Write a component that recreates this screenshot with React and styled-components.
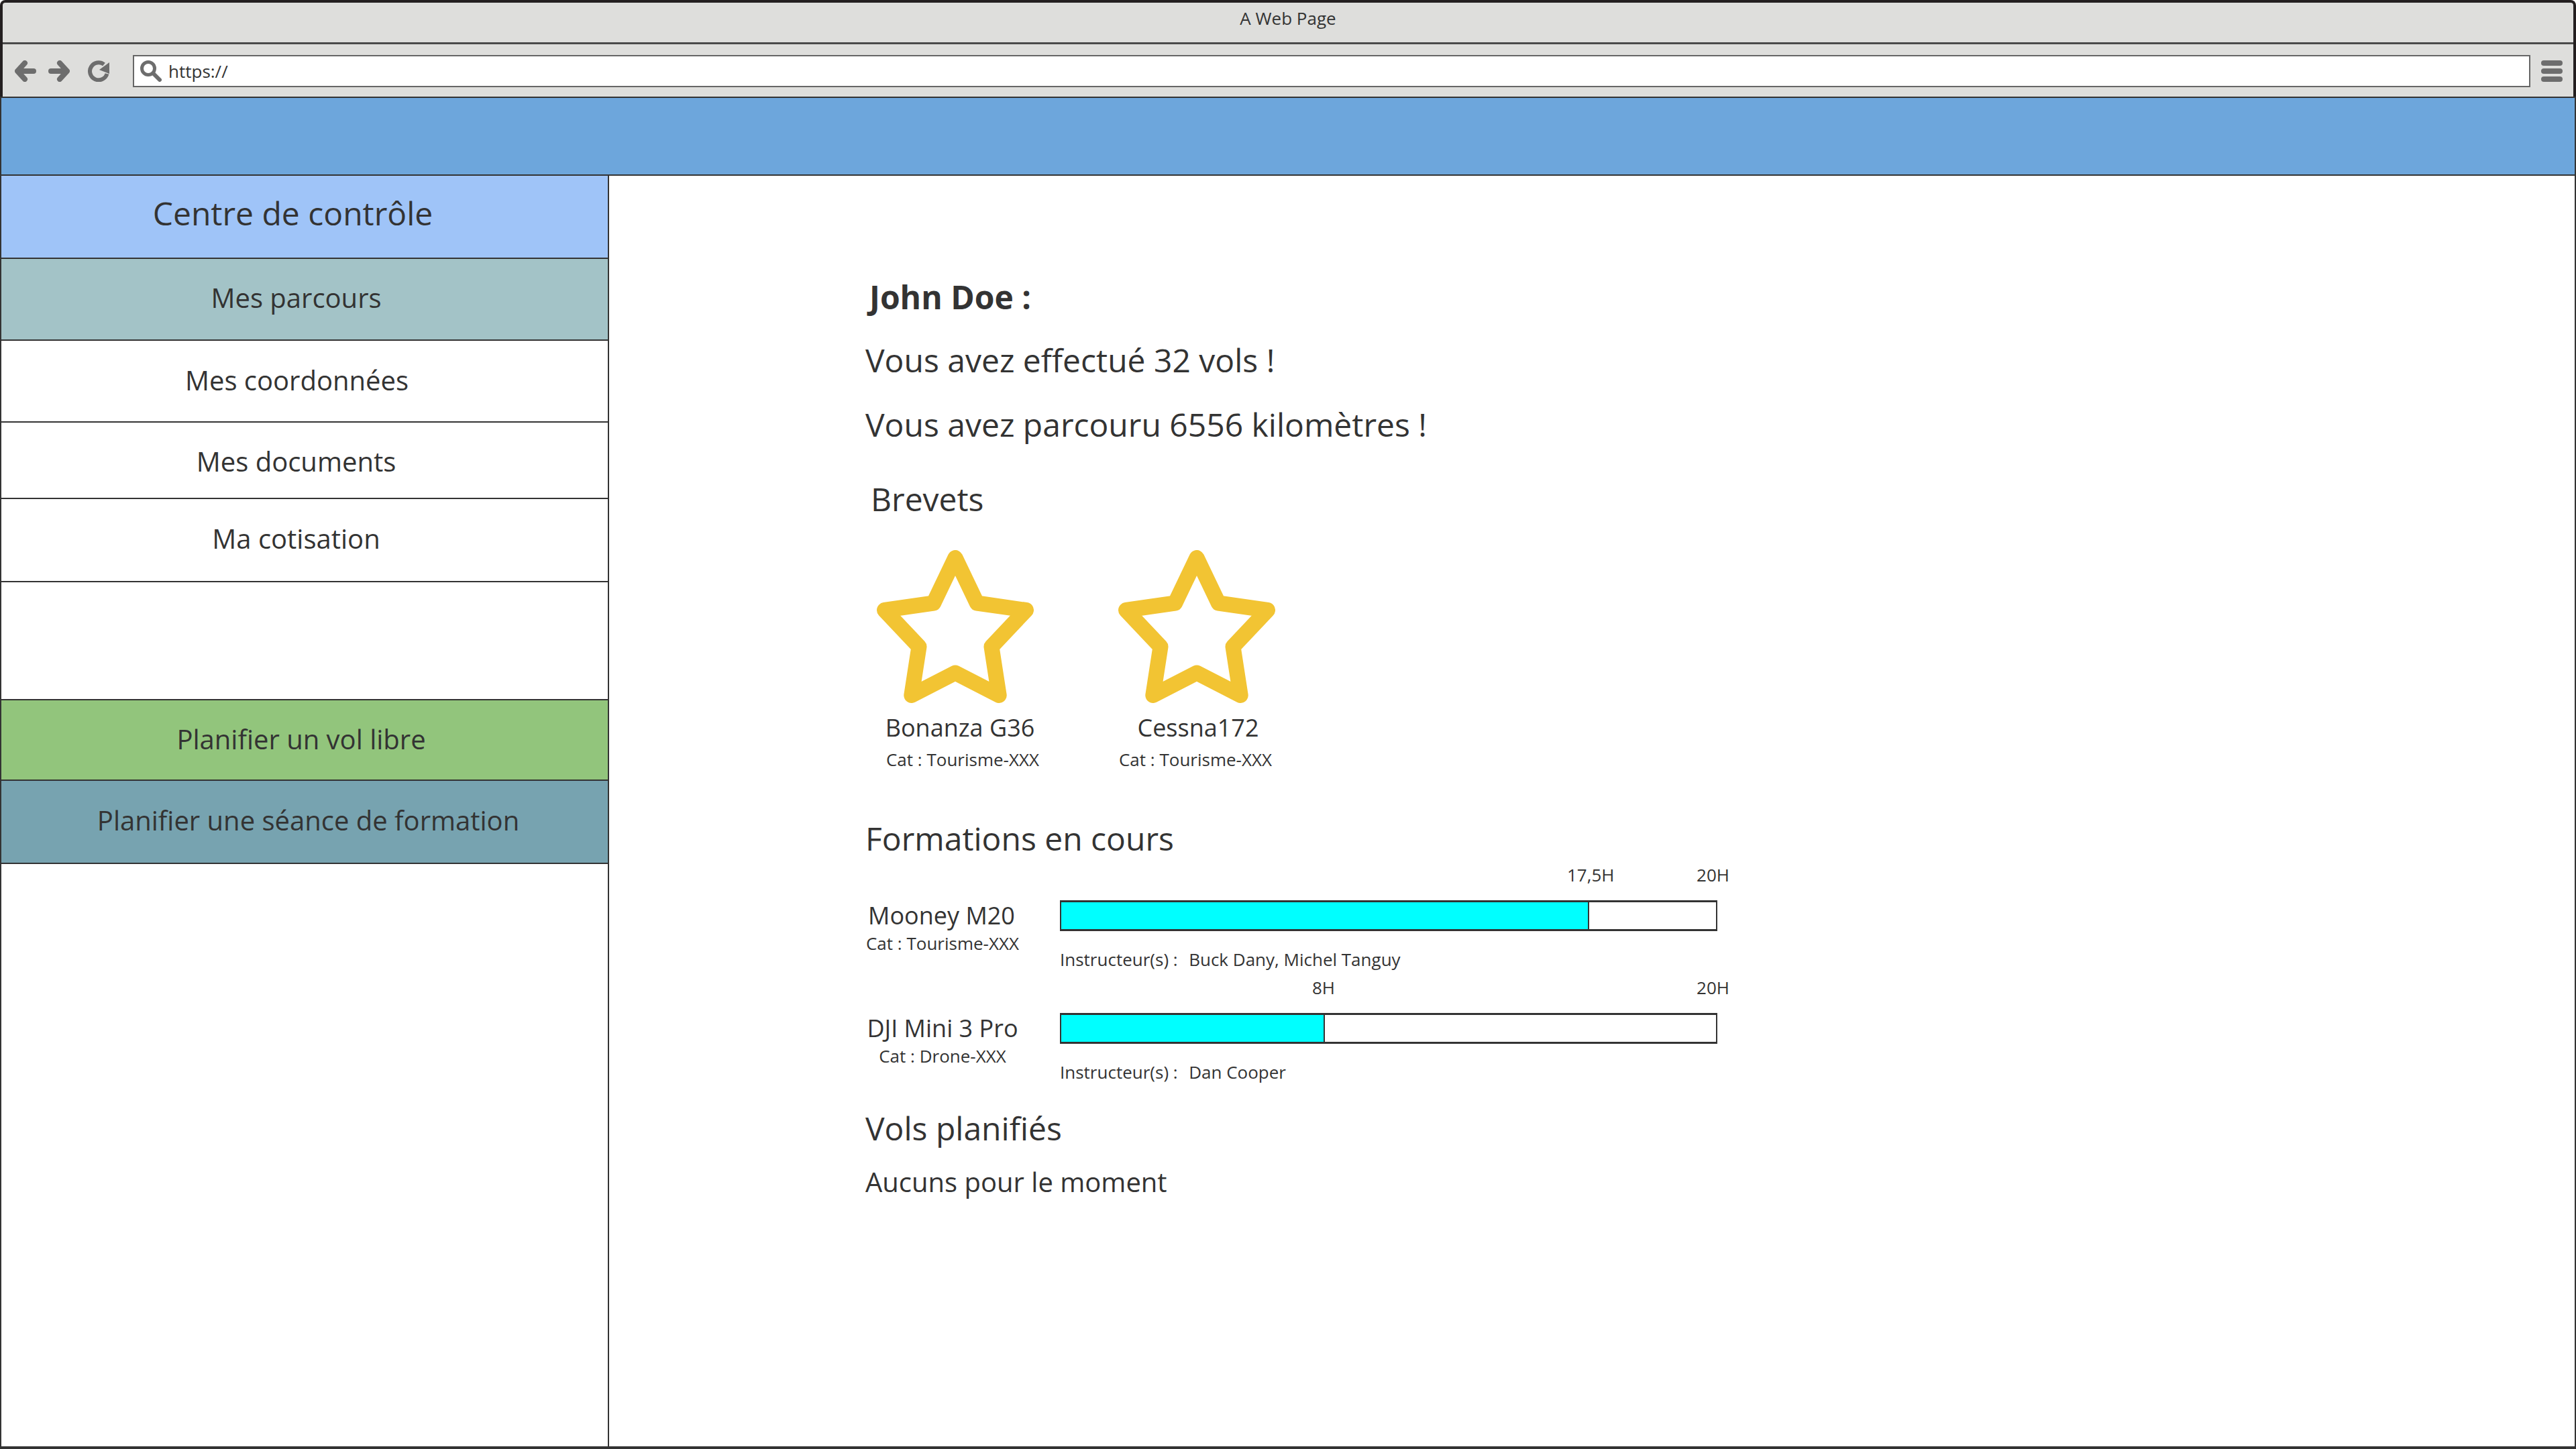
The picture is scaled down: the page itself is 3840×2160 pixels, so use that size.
import React from 'react'
import styled, { createGlobalStyle } from 'styled-components'

const GlobalStyle = createGlobalStyle`
  html, body {
    margin: 0;
    padding: 0;
    background: #fff;
  }
  * {
    box-sizing: border-box;
  }
`

const Window = styled.div`
  width: 3840px;
  height: 2160px;
  display: flex;
  flex-direction: column;
  overflow: hidden;
  font-family: 'Open Sans', 'Noto Sans', sans-serif;
  color: #333;
`

const Chrome = styled.header`
  height: 144px;
  flex-shrink: 0;
  background: #dededc;
  border: 4px solid #231f20;
  border-bottom: none;
  border-radius: 8px 8px 0 0;
`

const TitleBar = styled.div`
  height: 62px;
  display: flex;
  align-items: center;
  justify-content: center;
  font-size: 26px;
  padding-bottom: 14px;
  border-bottom: 3px solid #4a4a4a;
`

const Toolbar = styled.div`
  height: 78px;
  display: flex;
  align-items: center;
  padding: 2px 16px 0 18px;
`

const ToolIcon = styled.svg`
  width: 32px;
  height: 32px;
  flex-shrink: 0;
  margin-right: ${(p) => p.$gap || 0}px;
  color: #6d6d6d;
`

const AddressBar = styled.div`
  flex: 1;
  height: 48px;
  display: flex;
  align-items: center;
  background: #fff;
  border: 2px solid #666;
  padding-left: 9px;
  font-size: 26px;
  margin-right: 16px;
`

const Url = styled.span`
  margin-left: 10px;
`

const Banner = styled.div`
  height: 118px;
  flex-shrink: 0;
  background: #6da6dc;
  border: 2px solid #333;
`

const Body = styled.div`
  flex: 1;
  display: flex;
  min-height: 0;
  border: 2px solid #333;
  border-top: none;
  border-bottom-width: 4px;
`

const Sidebar = styled.nav`
  width: 906px;
  flex-shrink: 0;
  border-right: 2px solid #333;
`

const SideRow = styled.div`
  height: ${(p) => p.$h}px;
  display: flex;
  align-items: center;
  justify-content: center;
  background: ${(p) => p.$bg || 'transparent'};
  border-bottom: 2px solid #333;
  font-size: ${(p) => p.$size || 40}px;
  padding-top: ${(p) => p.$top || 0}px;
  padding-left: ${(p) => p.$left || 0}px;
  padding-right: ${(p) => p.$right || 0}px;
  padding-bottom: ${(p) => p.$bottom || 0}px;
`

const Main = styled.main`
  flex: 1;
  padding: 134px 0 0 382px;
`

const Line = styled.div`
  height: ${(p) => p.$h}px;
  display: flex;
  align-items: center;
  font-size: ${(p) => p.$size || 48}px;
  font-weight: ${(p) => (p.$bold ? 700 : 400)};
  padding-left: ${(p) => p.$left || 0}px;
  white-space: pre;
`

const Brevets = styled.div`
  display: flex;
  padding: 14px 0 54px 17px;
`

const Brevet = styled.div`
  width: 360px;
  display: flex;
  flex-direction: column;
  align-items: flex-start;
`

const Star = styled.svg`
  width: 234px;
  height: 228px;
  display: block;
  margin-bottom: 12px;
`

const BrevetName = styled.div`
  width: 234px;
  margin-left: ${(p) => p.$shift || 0}px;
  text-align: center;
  font-size: 36px;
  line-height: 50px;
  white-space: nowrap;
`

const BrevetCat = styled.div`
  width: 234px;
  margin-left: ${(p) => p.$shift || 0}px;
  text-align: center;
  font-size: 26px;
  line-height: 44px;
  white-space: nowrap;
`

const Formation = styled.div`
  display: grid;
  grid-template-columns: 290px 980px;
  grid-template-rows: 52px 46px 70px;
`

const FormationLabel = styled.div`
  grid-row: 2 / 4;
  grid-column: 1;
  width: 230px;
  text-align: center;
`

const FormationName = styled.div`
  font-size: 36px;
  line-height: 46px;
  white-space: nowrap;
  margin-left: ${(p) => p.$shift || 0}px;
`

const FormationCat = styled.div`
  font-size: 26px;
  line-height: 36px;
  white-space: nowrap;
`

const Scale = styled.div`
  grid-column: 2;
  grid-row: 1;
  display: flex;
  font-size: 26px;
  line-height: 28px;
  white-space: nowrap;
`

const ScaleMark = styled.span`
  flex: 1;
`

const ScaleEnd = styled.span`
  margin-right: -18px;
`

const Track = styled.div`
  grid-column: 2;
  grid-row: 2;
  height: 46px;
  border: 2px solid #333;
  border-top-width: 3px;
  border-bottom-width: 3px;
  background: #fff;
`

const Fill = styled.div`
  height: 100%;
  background: #00ffff;
  border-right: 2px solid #333;
`

const Instructors = styled.div`
  grid-column: 2;
  grid-row: 3;
  font-size: 26px;
  line-height: 36px;
  padding-top: 24px;
  white-space: pre;
`

const People = styled.span`
  margin-left: 3px;
`

const brevets = [
  { name: 'Bonanza G36', nameShift: 7, catShift: 11 },
  { name: 'Cessna172', nameShift: 2, catShift: -2 },
]

const formations = [
  {
    name: 'Mooney M20',
    nameShift: -3,
    cat: 'Cat : Tourisme-XXX',
    hours: '17,5H',
    fill: 787,
    markPad: 756,
    people: 'Buck Dany, Michel Tanguy',
  },
  {
    name: 'DJI Mini 3 Pro',
    nameShift: 0,
    cat: 'Cat : Drone-XXX',
    hours: '8H',
    fill: 393,
    markPad: 376,
    people: 'Dan Cooper',
  },
]

function BackIcon() {
  return (
    <ToolIcon viewBox="0 0 32 32" $gap={18} fill="none" stroke="currentColor" strokeWidth="8" strokeLinecap="round" strokeLinejoin="round">
      <path d="M28 16H6M15 4L4 16l11 12" />
    </ToolIcon>
  )
}

function ForwardIcon() {
  return (
    <ToolIcon viewBox="0 0 32 32" $gap={27} fill="none" stroke="currentColor" strokeWidth="8" strokeLinecap="round" strokeLinejoin="round">
      <path d="M4 16h22M17 4l11 12-11 12" />
    </ToolIcon>
  )
}

function ReloadIcon() {
  return (
    <ToolIcon viewBox="0 0 32 32" $gap={35}>
      <path d="M28.5 20A13 13 0 1 1 24 6" fill="none" stroke="currentColor" strokeWidth="6" />
      <path d="M32 3v17l-15-6z" fill="currentColor" />
    </ToolIcon>
  )
}

function SearchIcon() {
  return (
    <ToolIcon viewBox="0 0 32 32" fill="none" stroke="currentColor">
      <circle cx="12" cy="12" r="9.5" strokeWidth="5" />
      <path d="M20 20l9 9" strokeWidth="6" strokeLinecap="round" />
    </ToolIcon>
  )
}

function MenuIcon() {
  return (
    <ToolIcon viewBox="0 0 32 32" fill="currentColor">
      <rect x="0" y="0" width="32" height="8" rx="4" />
      <rect x="0" y="12" width="32" height="8" rx="4" />
      <rect x="0" y="24" width="32" height="8" rx="4" />
    </ToolIcon>
  )
}

function BrevetStar() {
  return (
    <Star viewBox="0 0 234 228">
      <polygon
        points="117,11.5 149.3,79 222.5,89.5 171,144 182.2,216.5 117,183 51.8,216.5 63,144 11.5,89.5 84.7,79"
        fill="none"
        stroke="#f2c433"
        strokeWidth="23"
        strokeLinejoin="round"
      />
    </Star>
  )
}

export default function App() {
  return (
    <>
      <GlobalStyle />
      <Window>
        <Chrome>
          <TitleBar>A Web Page</TitleBar>
          <Toolbar>
            <BackIcon />
            <ForwardIcon />
            <ReloadIcon />
            <AddressBar>
              <SearchIcon />
              <Url>https://</Url>
            </AddressBar>
            <MenuIcon />
          </Toolbar>
        </Chrome>
        <Banner />
        <Body>
          <Sidebar>
            <SideRow $h={124} $bg="#9fc4f8" $size={48} $right={35} $bottom={11}>Centre de contrôle</SideRow>
            <SideRow $h={122} $bg="#a3c3c7" $right={25} $bottom={5}>Mes parcours</SideRow>
            <SideRow $h={122} $right={23} $bottom={4}>Mes coordonnées</SideRow>
            <SideRow $h={114} $right={25} $top={3}>Mes documents</SideRow>
            <SideRow $h={124} $right={25} $bottom={6}>Ma cotisation</SideRow>
            <SideRow $h={176} />
            <SideRow $h={120} $bg="#92c57c" $right={10} $bottom={4}>Planifier un vol libre</SideRow>
            <SideRow $h={124} $bg="#77a3b0" $left={11} $bottom={5}>Planifier une séance de formation</SideRow>
          </Sidebar>
          <Main>
            <Line $h={92} $bold $left={6}>John Doe :</Line>
            <Line $h={96}>Vous avez effectué 32 vols !</Line>
            <Line $h={96}>Vous avez parcouru 6556 kilomètres !</Line>
            <Line $h={126} $left={8}>Brevets</Line>
            <Brevets>
              {brevets.map((b) => (
                <Brevet key={b.name}>
                  <BrevetStar />
                  <BrevetName $shift={b.nameShift}>{b.name}</BrevetName>
                  <BrevetCat $shift={b.catShift}>Cat : Tourisme-XXX</BrevetCat>
                </Brevet>
              ))}
            </Brevets>
            <Line $h={82}>Formations en cours</Line>
            {formations.map((f) => (
              <Formation key={f.name}>
                <Scale>
                  <ScaleMark style={{ paddingLeft: f.markPad }}>{f.hours}</ScaleMark>
                  <ScaleEnd>20H</ScaleEnd>
                </Scale>
                <FormationLabel>
                  <FormationName $shift={f.nameShift}>{f.name}</FormationName>
                  <FormationCat>{f.cat}</FormationCat>
                </FormationLabel>
                <Track>
                  <Fill style={{ width: f.fill }} />
                </Track>
                <Instructors>
                  {'Instructeur(s) :  '}
                  <People>{f.people}</People>
                </Instructors>
              </Formation>
            ))}
            <Line $h={110}>Vols planifiés</Line>
            <Line $h={50} $size={40}>Aucuns pour le moment</Line>
          </Main>
        </Body>
      </Window>
    </>
  )
}
